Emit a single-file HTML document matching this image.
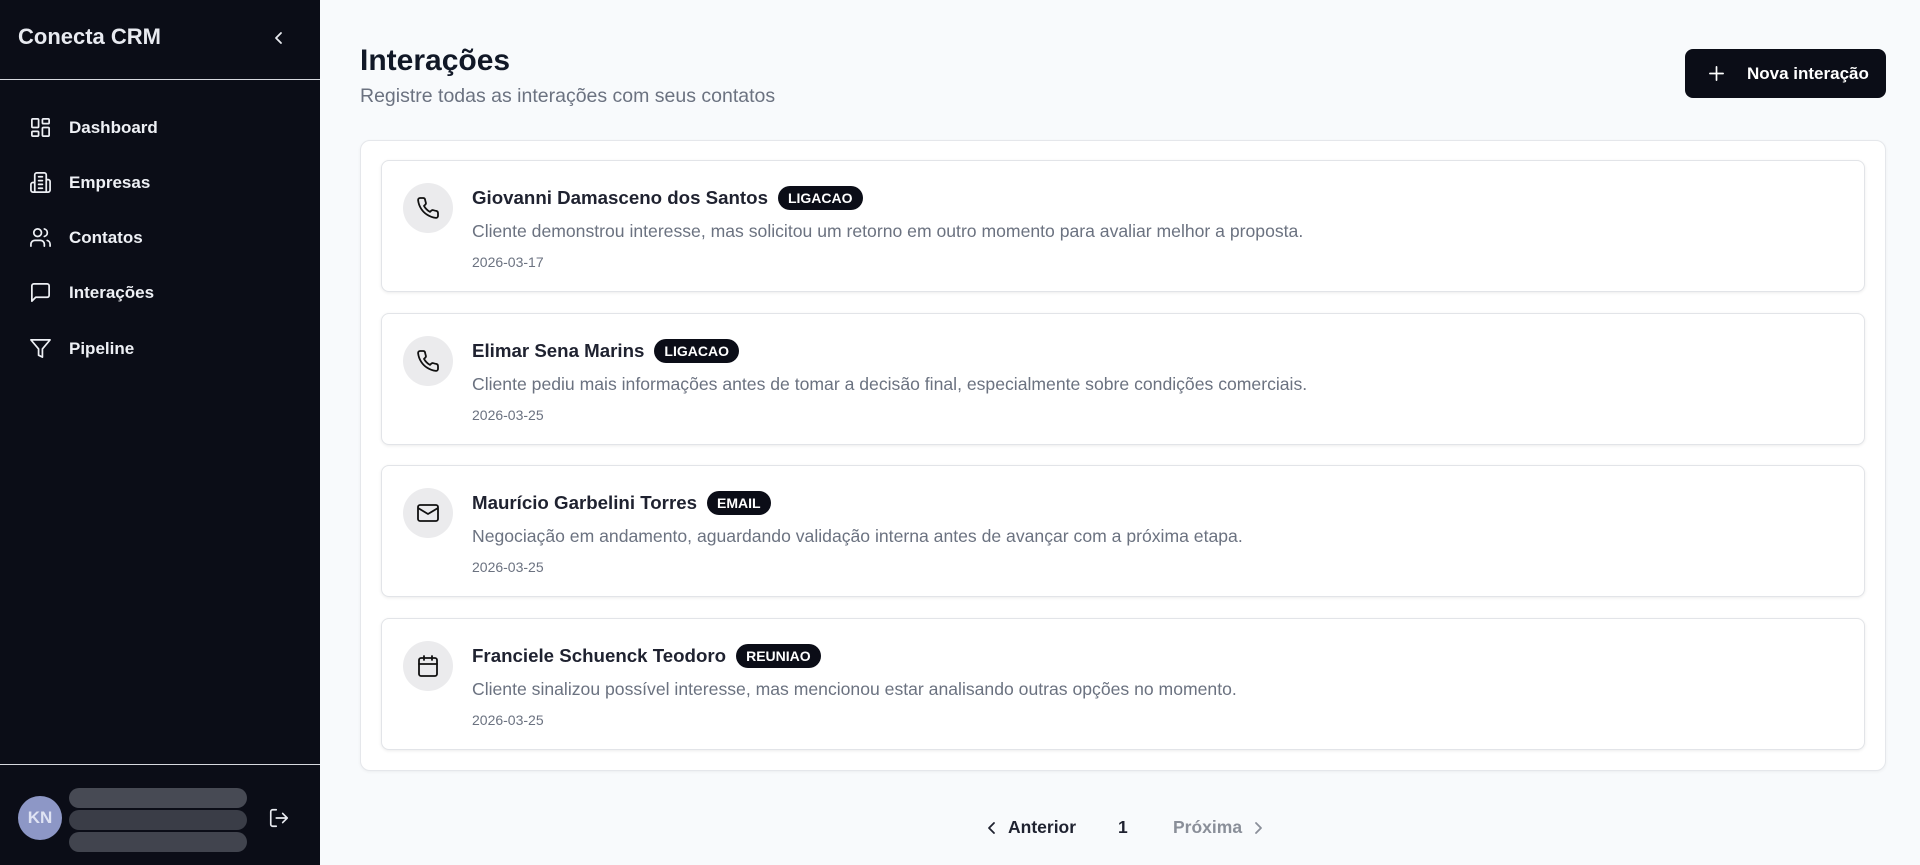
<!DOCTYPE html>
<html><head><meta charset="utf-8"><style>
*{box-sizing:border-box;margin:0;padding:0}
body{width:1920px;height:865px;overflow:hidden;background:#f8fafc;font-family:"Liberation Sans",sans-serif;position:relative}
.sb{position:absolute;left:0;top:0;width:320px;height:865px;background:#0b0d17;color:#e8eaf0}
.logo{position:absolute;left:18px;top:24px;font-size:22px;font-weight:bold;color:#e8eaf0}
.col{position:absolute;left:272px;top:29px}
.hr{position:absolute;left:0;width:320px;height:1px;background:#d6d8de}
.nav{position:absolute;left:29px;display:flex;align-items:center;font-size:17px;font-weight:bold;color:#eef0f5}
.nav svg{width:23px;height:23px;margin-right:17px}
.av{position:absolute;left:18px;top:796px;width:44px;height:44px;border-radius:50%;background:#8d97c6;color:#dfe3f3;font-size:17px;font-weight:bold;display:flex;align-items:center;justify-content:center}
.bar{position:absolute;left:69px;width:178px;height:20px;border-radius:10px;background:#3a3d47}
.main h1{position:absolute;left:360px;top:44px;font-size:30px;color:#111827}
.sub{position:absolute;left:360px;top:85px;font-size:19.5px;color:#6b7280}
.btn{position:absolute;left:1685px;top:49px;width:201px;height:49px;border-radius:8px;background:#0b0d17;color:#fff;font-size:17px;font-weight:bold;display:flex;align-items:center}
.outer{position:absolute;left:360px;top:140px;width:1526px;height:631px;background:#fff;border:1px solid #e5e7eb;border-radius:10px;box-shadow:0 1px 3px rgba(0,0,0,.05)}
.card{position:absolute;left:381px;width:1484px;height:132px;background:#fff;border:1px solid #e2e4e8;border-radius:8px;box-shadow:0 1px 3px rgba(0,0,0,.08)}
.ic{position:absolute;left:21px;top:22px;width:50px;height:50px;border-radius:50%;background:#ebebed;display:flex;align-items:center;justify-content:center}
.ic svg{width:24px;height:24px}
.nm{position:absolute;left:90px;top:25px;font-size:18.7px;font-weight:bold;color:#1f2230;display:flex;align-items:center;white-space:nowrap}
.bd{margin-left:10px;background:#0b0d17;color:#fff;font-size:14px;font-weight:bold;padding:4px 10px;border-radius:13px}
.ds{position:absolute;left:90px;top:60px;font-size:17.6px;color:#6b7280;white-space:nowrap}
.dt{position:absolute;left:90px;top:93px;font-size:14px;color:#6b7280}
.pg{position:absolute;top:817px;font-size:17.5px;font-weight:bold;display:flex;align-items:center}
</style></head><body>
<div class="sb">
<div class="logo">Conecta CRM</div>
<svg class="col" width="14" height="18" viewBox="0 0 14 18"><path d="M9 4L4 9l5 5" fill="none" stroke="#e8eaf0" stroke-width="1.8" stroke-linecap="round" stroke-linejoin="round"/></svg>
<div class="hr" style="top:79px"></div>
<div class="nav" style="top:116px"><svg viewBox="0 0 24 24" fill="none" stroke="#eef0f5" stroke-width="1.8" stroke-linejoin="round"><rect x="3" y="3" width="7" height="9" rx="1"/><rect x="14" y="3" width="7" height="5" rx="1"/><rect x="14" y="12" width="7" height="9" rx="1"/><rect x="3" y="16" width="7" height="5" rx="1"/></svg>Dashboard</div>
<div class="nav" style="top:171px"><svg viewBox="0 0 24 24" fill="none" stroke="#eef0f5" stroke-width="1.8" stroke-linejoin="round" stroke-linecap="round"><path d="M6 22V4a2 2 0 0 1 2-2h8a2 2 0 0 1 2 2v18Z"/><path d="M6 12H4a2 2 0 0 0-2 2v6a2 2 0 0 0 2 2h2M18 9h2a2 2 0 0 1 2 2v9a2 2 0 0 1-2 2h-2M10 6h4M10 10h4M10 14h4M10 18h4"/></svg>Empresas</div>
<div class="nav" style="top:226px"><svg viewBox="0 0 24 24" fill="none" stroke="#eef0f5" stroke-width="1.8" stroke-linecap="round"><path d="M16 21v-2a4 4 0 0 0-4-4H6a4 4 0 0 0-4 4v2"/><circle cx="9" cy="7" r="4"/><path d="M22 21v-2a4 4 0 0 0-3-3.9M16 3.1a4 4 0 0 1 0 7.8"/></svg>Contatos</div>
<div class="nav" style="top:281px"><svg viewBox="0 0 24 24" fill="none" stroke="#eef0f5" stroke-width="1.8" stroke-linejoin="round"><path d="M21 15a2 2 0 0 1-2 2H7l-4 4V5a2 2 0 0 1 2-2h14a2 2 0 0 1 2 2z"/></svg>Interações</div>
<div class="nav" style="top:337px"><svg viewBox="0 0 24 24" fill="none" stroke="#eef0f5" stroke-width="1.8" stroke-linejoin="round"><path d="M22 3H2l8 9.5V19l4 2v-8.5L22 3z"/></svg>Pipeline</div>
<div class="hr" style="top:764px"></div>
<div class="av">KN</div>
<div class="bar" style="top:788px;background:#474a54"></div>
<div class="bar" style="top:810px"></div>
<div class="bar" style="top:832px;background:#41444e"></div>
<svg style="position:absolute;left:268px;top:807px" width="22" height="22" viewBox="0 0 24 24" fill="none" stroke="#e8eaf0" stroke-width="1.8" stroke-linecap="round" stroke-linejoin="round"><path d="M9 21H5a2 2 0 0 1-2-2V5a2 2 0 0 1 2-2h4M16 17l5-5-5-5M21 12H9"/></svg>
</div>
<div class="main">
<h1>Interações</h1>
<div class="sub">Registre todas as interações com seus contatos</div>
<div class="btn"><svg style="margin:0 22px 0 23px" width="17" height="17" viewBox="0 0 18 18" stroke="#fff" stroke-width="1.8" stroke-linecap="round"><path d="M9 2v14M2 9h14"/></svg>Nova interação</div>
<div class="outer"></div>

<div class="card" style="top:160px"><div class="ic"><svg viewBox="0 0 24 24" fill="none" stroke="#111" stroke-width="1.8" stroke-linejoin="round"><path d="M22 16.9v3a2 2 0 0 1-2.2 2 19.8 19.8 0 0 1-8.6-3.1 19.5 19.5 0 0 1-6-6A19.8 19.8 0 0 1 2.1 4.2 2 2 0 0 1 4.1 2h3a2 2 0 0 1 2 1.7c.1 1 .4 1.9.7 2.8a2 2 0 0 1-.5 2.1L8 9.9a16 16 0 0 0 6 6l1.3-1.3a2 2 0 0 1 2.1-.4c.9.3 1.8.6 2.8.7a2 2 0 0 1 1.7 2z"/></svg></div><div class="nm">Giovanni Damasceno dos Santos<span class="bd">LIGACAO</span></div><div class="ds">Cliente demonstrou interesse, mas solicitou um retorno em outro momento para avaliar melhor a proposta.</div><div class="dt">2026-03-17</div></div>

<div class="card" style="top:313px"><div class="ic"><svg viewBox="0 0 24 24" fill="none" stroke="#111" stroke-width="1.8" stroke-linejoin="round"><path d="M22 16.9v3a2 2 0 0 1-2.2 2 19.8 19.8 0 0 1-8.6-3.1 19.5 19.5 0 0 1-6-6A19.8 19.8 0 0 1 2.1 4.2 2 2 0 0 1 4.1 2h3a2 2 0 0 1 2 1.7c.1 1 .4 1.9.7 2.8a2 2 0 0 1-.5 2.1L8 9.9a16 16 0 0 0 6 6l1.3-1.3a2 2 0 0 1 2.1-.4c.9.3 1.8.6 2.8.7a2 2 0 0 1 1.7 2z"/></svg></div><div class="nm">Elimar Sena Marins<span class="bd">LIGACAO</span></div><div class="ds">Cliente pediu mais informações antes de tomar a decisão final, especialmente sobre condições comerciais.</div><div class="dt">2026-03-25</div></div>

<div class="card" style="top:465px"><div class="ic"><svg viewBox="0 0 24 24" fill="none" stroke="#111" stroke-width="1.8" stroke-linejoin="round"><rect x="2" y="4" width="20" height="16" rx="2"/><path d="M22 7l-10 6L2 7"/></svg></div><div class="nm">Maurício Garbelini Torres<span class="bd">EMAIL</span></div><div class="ds">Negociação em andamento, aguardando validação interna antes de avançar com a próxima etapa.</div><div class="dt">2026-03-25</div></div>

<div class="card" style="top:618px"><div class="ic"><svg viewBox="0 0 24 24" fill="none" stroke="#111" stroke-width="1.8" stroke-linecap="round" stroke-linejoin="round"><rect x="3" y="4" width="18" height="18" rx="2"/><path d="M8 2v4M16 2v4M3 10h18"/></svg></div><div class="nm">Franciele Schuenck Teodoro<span class="bd">REUNIAO</span></div><div class="ds">Cliente sinalizou possível interesse, mas mencionou estar analisando outras opções no momento.</div><div class="dt">2026-03-25</div></div>

<div class="pg" style="left:984px;color:#1f2230"><svg width="16" height="16" viewBox="0 0 16 16" style="margin-right:8px"><path d="M10 3L5 8l5 5" fill="none" stroke="#1f2230" stroke-width="1.8" stroke-linecap="round" stroke-linejoin="round"/></svg>Anterior</div>
<div class="pg" style="left:1118px;color:#1f2230">1</div>
<div class="pg" style="left:1173px;color:#8a8f99">Próxima<svg width="16" height="16" viewBox="0 0 16 16" style="margin-left:8px"><path d="M6 3l5 5-5 5" fill="none" stroke="#8a8f99" stroke-width="1.8" stroke-linecap="round" stroke-linejoin="round"/></svg></div>
</div>
</body></html>
